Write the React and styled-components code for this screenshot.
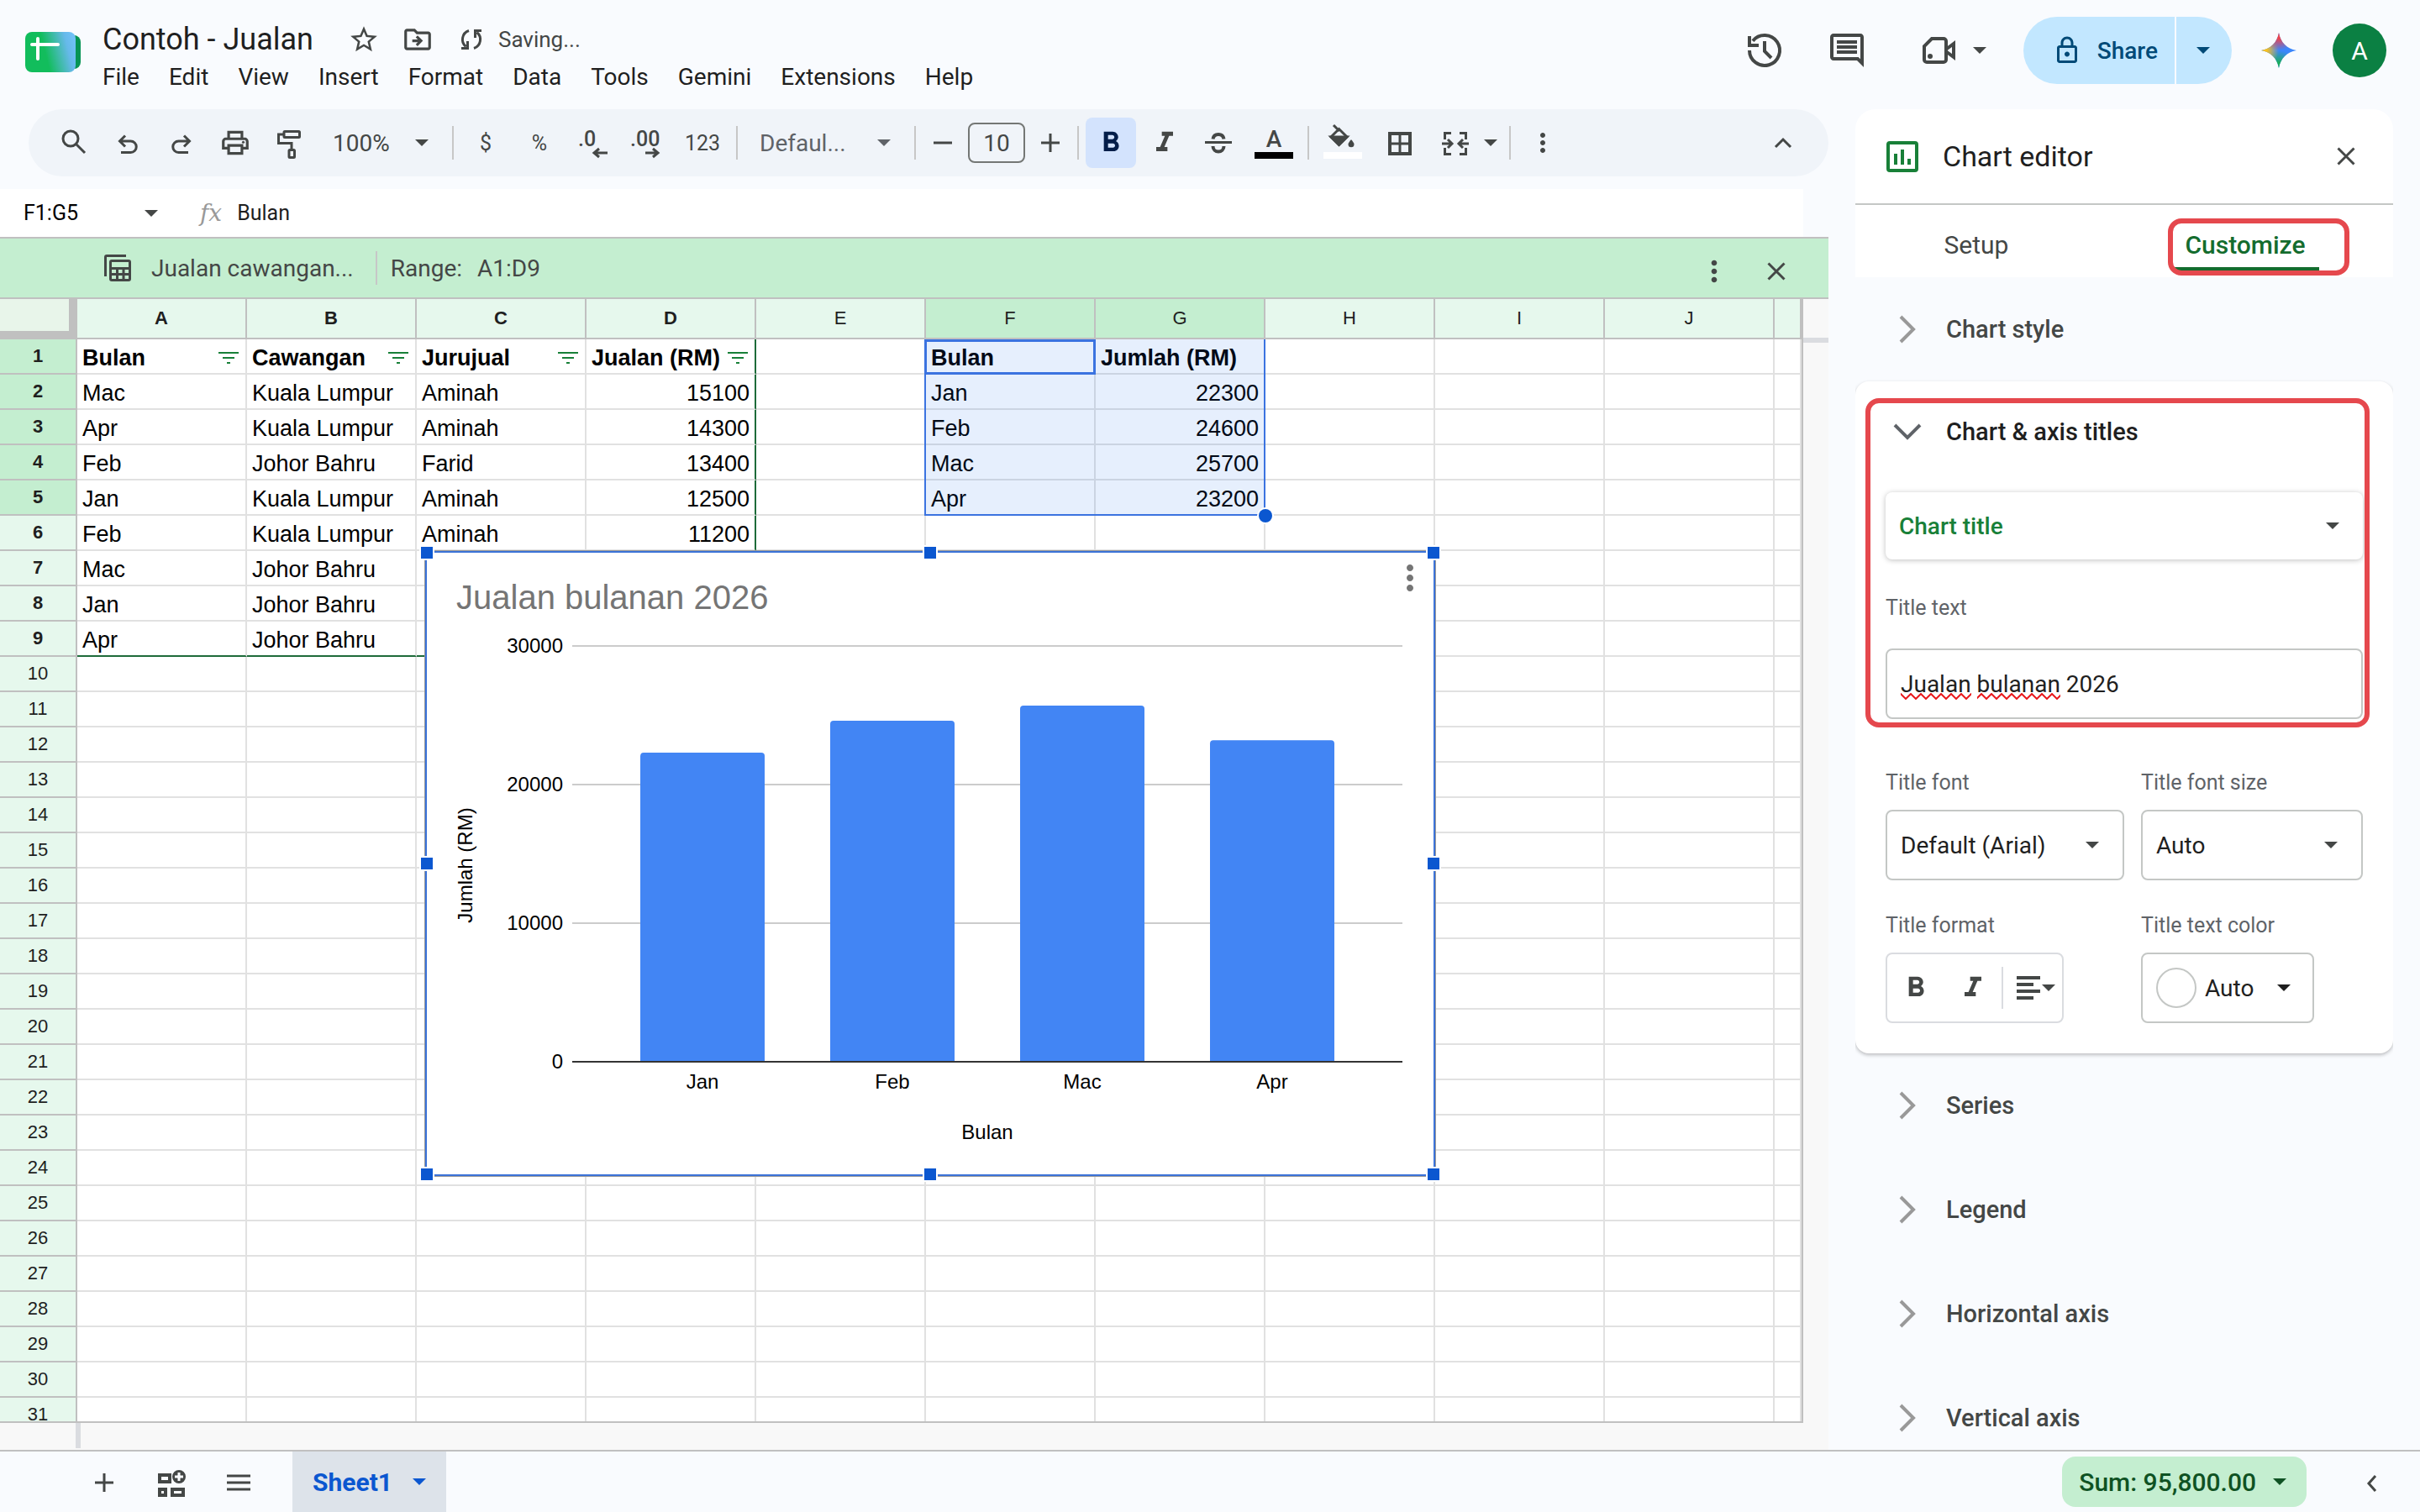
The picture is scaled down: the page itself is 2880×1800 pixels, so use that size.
import React, { useState } from "react";
import styled, { createGlobalStyle } from "styled-components";
import {
  MdStarBorder,
  MdOutlineDriveFileMove,
  MdOutlineComment,
  MdOutlineLock,
  MdOutlinePrint,
  MdFormatBold,
  MdFormatItalic,
  MdMoreVert,
} from "react-icons/md";

const menuItems = [
  "File",
  "Edit",
  "View",
  "Insert",
  "Format",
  "Data",
  "Tools",
  "Gemini",
  "Extensions",
  "Help",
];

const columns = ["A", "B", "C", "D", "E", "F", "G", "H", "I", "J"];

const sales = [
  ["Bulan", "Cawangan", "Jurujual", "Jualan (RM)"],
  ["Mac", "Kuala Lumpur", "Aminah", "15100"],
  ["Apr", "Kuala Lumpur", "Aminah", "14300"],
  ["Feb", "Johor Bahru", "Farid", "13400"],
  ["Jan", "Kuala Lumpur", "Aminah", "12500"],
  ["Feb", "Kuala Lumpur", "Aminah", "11200"],
  ["Mac", "Johor Bahru"],
  ["Jan", "Johor Bahru"],
  ["Apr", "Johor Bahru"],
];

const totals = [
  ["Bulan", "Jumlah (RM)"],
  ["Jan", "22300"],
  ["Feb", "24600"],
  ["Mac", "25700"],
  ["Apr", "23200"],
];

const rowCount = 31;

const cellValue = (row, col) => {
  if (col < 4) return sales[row]?.[col];
  if (col === 5 || col === 6) return totals[row]?.[col - 5];
  return undefined;
};

/* Icons */

const Icon = ({ size = 48, box = 48, width = 3, children }) => (
  <svg
    width={size}
    height={size}
    viewBox={`0 0 ${box} ${box}`}
    fill="none"
    stroke="currentColor"
    strokeWidth={width}
    aria-hidden="true"
  >
    {children}
  </svg>
);

const Caret = () => (
  <svg width="16" height="8" viewBox="0 0 16 8" aria-hidden="true">
    <path d="M0 0h16L8 8z" fill="currentColor" />
  </svg>
);

const SheetsLogo = () => (
  <Logo width="66" height="48" viewBox="0 0 66 48" aria-hidden="true">
    <defs>
      <linearGradient id="logoFace" x1="0" x2="1" y1="0.6" y2="0.4">
        <stop offset="0.4" stopColor="#12bd5c" />
        <stop offset="0.85" stopColor="#66b9ea" />
        <stop offset="1" stopColor="#6fc0f5" />
      </linearGradient>
    </defs>
    <rect x="24" y="4" width="42" height="40" rx="8" fill="#079455" />
    <rect width="60" height="48" rx="8" fill="url(#logoFace)" />
    <path
      d="M8 15h31M15 8v24"
      stroke="#fff"
      strokeWidth="4"
      strokeLinecap="round"
    />
  </Logo>
);

const SyncIcon = () => (
  <Icon>
    <path d="M21 13.5A11 11 0 0 0 17.5 32.5M12 34.5h7.5V26" />
    <path d="M27 34.5A11 11 0 0 0 30.5 15.5M36 13.5h-7.5V22" />
  </Icon>
);

const HistoryIcon = () => (
  <Icon width={4}>
    <path d="M6 24a18 18 0 1 0 4-11.3" />
    <path d="M6 7v11h11" />
    <path d="M24 13v12l8 8" />
  </Icon>
);

const CameraIcon = () => (
  <Icon width={4}>
    <path d="M15 10h14a3 3 0 0 1 3 3v22a3 3 0 0 1-3 3H9a3 3 0 0 1-3-3V19z" />
    <path d="M33 22l8-6v16l-8-6" />
    <circle cx="13" cy="31" r="3" fill="currentColor" stroke="none" />
  </Icon>
);

const GeminiIcon = () => (
  <svg width="42" height="42" viewBox="0 0 40 40" aria-hidden="true">
    <defs>
      <radialGradient id="gRed" cx="0.5" cy="0" r="0.5">
        <stop offset="0.3" stopColor="#f0434a" />
        <stop offset="1" stopColor="#f0434a" stopOpacity="0" />
      </radialGradient>
      <radialGradient id="gYellow" cx="0" cy="0.5" r="0.5">
        <stop offset="0.3" stopColor="#fcc21c" />
        <stop offset="1" stopColor="#fcc21c" stopOpacity="0" />
      </radialGradient>
      <radialGradient id="gGreen" cx="0.5" cy="1" r="0.5">
        <stop offset="0.3" stopColor="#1cae5b" />
        <stop offset="1" stopColor="#1cae5b" stopOpacity="0" />
      </radialGradient>
    </defs>
    {["#3b86fb", "url(#gGreen)", "url(#gYellow)", "url(#gRed)"].map((fill) => (
      <path
        key={fill}
        d="M20 0C22 11 29 18 40 20C29 22 22 29 20 40C18 29 11 22 0 20C11 18 18 11 20 0Z"
        fill={fill}
      />
    ))}
  </svg>
);

const SearchIcon = () => (
  <Icon>
    <circle cx="20" cy="19" r="9" />
    <path d="M26.5 25.500L37 36" />
  </Icon>
);

const UndoIcon = () => (
  <Icon>
    <path d="M21 15.5L14.5 22l6.5 6.5M14.5 22h13a6.75 6.75 0 0 1 0 13.5H16" />
  </Icon>
);

const RedoIcon = () => (
  <Icon>
    <path d="M27 15.5l6.5 6.5-6.5 6.5M33.5 22h-13a6.75 6.75 0 0 0 0 13.5H32" />
  </Icon>
);

const RollerIcon = () => (
  <Icon>
    <rect x="18" y="10.5" width="18.5" height="7" rx="1" />
    <path d="M18 14h-6.5v10.5H27V32" />
    <rect x="24" y="32.5" width="6.5" height="9" rx="1" />
  </Icon>
);

const DecimalIcon = ({ label, add }) => (
  <svg width="48" height="48" viewBox="0 0 48 48" aria-hidden="true">
    <text
      x={add ? 4 : 6}
      y="28"
      fontSize="25"
      fontWeight="500"
      fontFamily="Roboto, sans-serif"
      fill="currentColor"
    >
      {label}
    </text>
    <path
      d={add ? "M22 36h15M31 31l6 5-6 5" : "M26 36h15M31 31l-6 5 6 5"}
      fill="none"
      stroke="currentColor"
      strokeWidth="3"
    />
  </svg>
);

const StrikeIcon = () => (
  <Icon width={4}>
    <path d="M8 23.5h32" strokeWidth="3" />
    <path d="M17.5 19.5c.5-3.5 3-5.5 6.500-5.500s6 2 6.500 5.500" />
    <path d="M17.5 28c0 4 3 6.5 6.5 6.500s6.500-2.500 6.500-6.500" />
  </Icon>
);

const TextColorIcon = () => (
  <svg width="48" height="48" viewBox="0 0 48 48" aria-hidden="true">
    <text
      x="24"
      y="29"
      fontSize="28"
      fontWeight="500"
      textAnchor="middle"
      fontFamily="Roboto, sans-serif"
      fill="currentColor"
    >
      A
    </text>
    <path d="M1 35h46v8H1z" fill="#000" />
  </svg>
);

const FillIcon = () => (
  <Icon>
    <path d="M13 3l7 7M10 17l9.5-9.500L29 17l-9.500 9.500z" />
    <path d="M10 17h19l-9.500 9.500z" fill="currentColor" />
    <path
      d="M34 20s3.5 4 3.5 5.700a3.500 3.500 0 0 1-7 0C30.500 24 34 20 34 20z"
      fill="currentColor"
      stroke="none"
    />
    <rect x="1" y="35" width="46" height="8" fill="#fff" stroke="none" />
  </Icon>
);

const BordersIcon = () => (
  <Icon width={4}>
    <path d="M12 13h24v24H12z" />
    <path d="M24 13v24M12 25h24" strokeWidth="3" />
  </Icon>
);

const MergeIcon = () => (
  <Icon>
    <path d="M19 12.5h-7.5V20M29 12.5h7.5V20M19 37.5h-7.5V30M29 37.5h7.5V30" />
    <path d="M8 25h12M15 20l5 5-5 5M40 25H28M33 20l-5 5 5 5" />
  </Icon>
);

const TableIcon = () => (
  <Icon size={36} box={36}>
    <path d="M28 3.5H5A1.5 1.5 0 0 0 3.5 5v23" />
    <rect x="9.5" y="9.5" width="23" height="23" rx="1.5" />
    <path d="M9 18.5h24M9 25.5h24M17.5 18v14M25 18v14" />
  </Icon>
);

const CloseIcon = () => (
  <Icon>
    <path d="M14.5 14.5l19 19M33.5 14.5l-19 19" />
  </Icon>
);

const FilterIcon = () => (
  <svg width="24" height="16" viewBox="0 0 24 16" aria-hidden="true">
    <path d="M0 1h24v2H0zM5 7h14v2H5zM10 13h4v2h-4z" fill="#188038" />
  </svg>
);

const Chevron = ({ open }) => (
  <Icon width={4}>
    <path d={open ? "M9 16l15 15 15-15" : "M16 9l15 15-15 15"} />
  </Icon>
);

/* Parts */

const MenuButtonList = () => (
  <MenuBar>
    {menuItems.map((item) => (
      <MenuButton key={item}>{item}</MenuButton>
    ))}
  </MenuBar>
);

const ColumnChart = () => {
  const ticks = [30000, 20000, 10000, 0];
  const base = 606;
  const y = (value) => base - (value * 495) / 30000;
  return (
    <svg
      width="100%"
      viewBox="0 0 1198 740"
      fontFamily="Liberation Sans, Arial, sans-serif"
    >
      <text x="35" y="67" fontSize="40" fill="#757575">
        Jualan bulanan 2026
      </text>
      {ticks.map((tick) => (
        <g key={tick}>
          <path
            d={`M173 ${y(tick)}H1161`}
            stroke={tick ? "#ccc" : "#333"}
            strokeWidth="2"
          />
          <text x="162" y={y(tick) + 8} fontSize="24" textAnchor="end">
            {tick}
          </text>
        </g>
      ))}
      {totals.slice(1).map(([month, value], i) => {
        const x = 254 + i * 226;
        const top = y(Number(value));
        return (
          <g key={month}>
            <path
              d={`M${x} ${base - 1}V${top + 4}q0-4 4-4h140q4 0 4 4V${base - 1}z`}
              fill="#4285f4"
            />
            <text x={x + 74} y="638" fontSize="24" textAnchor="middle">
              {month}
            </text>
          </g>
        );
      })}
      <text x="667" y="698" fontSize="24" textAnchor="middle">
        Bulan
      </text>
      <text
        x="54"
        y="372"
        fontSize="24"
        textAnchor="middle"
        transform="rotate(-90 54 372)"
      >
        Jumlah (RM)
      </text>
    </svg>
  );
};

const Spreadsheet = () => (
  <SheetTable>
    <colgroup>
      <HeadCol />
      {columns.map((c) => (
        <DataCol key={c} />
      ))}
      <col />
    </colgroup>
    <thead>
      <tr>
        <Corner />
        {columns.map((c, i) => (
          <ColumnHead key={c} scope="col" $bold={i < 4} $on={i === 5 || i === 6}>
            {c}
          </ColumnHead>
        ))}
        <ColumnHead />
      </tr>
    </thead>
    <tbody>
      {Array.from({ length: rowCount }, (_, row) => (
        <tr key={row}>
          <RowHead scope="row" $bold={row < 9} $on={row < 5}>
            {row + 1}
          </RowHead>
          {columns.map((c, col) => {
            const value = cellValue(row, col);
            const filter = row === 0 && col < 4;
            return (
              <Cell
                key={c}
                $bold={row === 0}
                $number={/^\d+$/.test(value ?? "")}
                $edgeRight={col === 3 && row < 9}
                $edgeBottom={col < 4 && row === 8}
              >
                {filter ? (
                  <FilterCell>
                    {value}
                    <FilterButton aria-label={`Filter ${value}`}>
                      <FilterIcon />
                    </FilterButton>
                  </FilterCell>
                ) : (
                  value
                )}
              </Cell>
            );
          })}
          <Cell />
        </tr>
      ))}
    </tbody>
  </SheetTable>
);

const Section = ({ title, open }) => (
  <SectionButton aria-expanded={Boolean(open)} $open={open}>
    <Chevron open={open} />
    {title}
  </SectionButton>
);

const SelectField = ({ id, label, options, accent }) => (
  <SelectBox $accent={accent}>
    <select id={id} aria-label={label}>
      {options.map((o) => (
        <option key={o}>{o}</option>
      ))}
    </select>
    <Caret />
  </SelectBox>
);

const ChartEditor = () => {
  const [title, setTitle] = useState("Jualan bulanan 2026");

  return (
    <Panel>
      <PanelHeader>
        <Icon width={4}>
          <rect x="7" y="8" width="34" height="33" rx="2" />
          <path d="M16 21v13M24 16v18M32 27v7" />
        </Icon>
        <h2>Chart editor</h2>
        <IconButton aria-label="Close chart editor">
          <CloseIcon />
        </IconButton>
      </PanelHeader>
      <Tabs role="tablist">
        <Tab role="tab" aria-selected="false">
          <span>Setup</span>
        </Tab>
        <Tab role="tab" aria-selected="true" $active>
          <span>Customize</span>
          <TabHighlight />
        </Tab>
      </Tabs>
      <Section title="Chart style" />
      <Card>
        <Section title="Chart & axis titles" open />
        <CardBody>
          <SelectField
            label="Title type"
            accent
            options={["Chart title", "Horizontal axis title"]}
          />
          <TitleField>
            <FieldLabel htmlFor="title-text">Title text</FieldLabel>
            <TextBox
              id="title-text"
              value={title}
              spellCheck="false"
              onChange={(e) => setTitle(e.target.value)}
            />
            <Squiggle width="196" height="8" aria-hidden="true">
              <defs>
                <pattern
                  id="wave"
                  width="12"
                  height="8"
                  patternUnits="userSpaceOnUse"
                >
                  <path
                    d="M-1 0L6 7L13 0"
                    fill="none"
                    stroke="#e8191c"
                    strokeWidth="2"
                  />
                </pattern>
              </defs>
              <rect width="84" height="8" fill="url(#wave)" />
              <rect x="91" width="99" height="8" fill="url(#wave)" />
            </Squiggle>
          </TitleField>
          <FieldGrid>
            <Field>
              <FieldLabel htmlFor="title-font">Title font</FieldLabel>
              <SelectField
                id="title-font"
                options={["Default (Arial)", "Roboto"]}
              />
            </Field>
            <Field>
              <FieldLabel htmlFor="title-size">Title font size</FieldLabel>
              <SelectField id="title-size" options={["Auto", "12", "14"]} />
            </Field>
            <Field>
              <FieldLabel as="span">Title format</FieldLabel>
              <FormatGroup>
                <FormatButton aria-label="Bold">
                  <MdFormatBold size={40} />
                </FormatButton>
                <FormatButton aria-label="Italic">
                  <MdFormatItalic size={40} />
                </FormatButton>
                <AlignButton aria-label="Align">
                  <Icon size={28} box={28} width={4}>
                    <path d="M0 2h28M0 10h20M0 18h28M0 26h20" />
                  </Icon>
                  <Caret />
                </AlignButton>
              </FormatGroup>
            </Field>
            <Field>
              <FieldLabel htmlFor="title-color">Title text color</FieldLabel>
              <ColorButton id="title-color">
                <Swatch />
                Auto
                <Caret />
              </ColorButton>
            </Field>
          </FieldGrid>
        </CardBody>
        <CardHighlight />
      </Card>
      <Section title="Series" />
      <Section title="Legend" />
      <Section title="Horizontal axis" />
      <Section title="Vertical axis" />
    </Panel>
  );
};

const App = () => {
  const [formula, setFormula] = useState("Bulan");
  const [range, setRange] = useState("F1:G5");
  const [fontSize, setFontSize] = useState("10");

  return (
    <>
      <GlobalStyle />
      <Page>
        <Header>
          <SheetsLogo />
          <TitleBlock>
            <TitleRow>
              <h1>Contoh - Jualan</h1>
              <IconButton aria-label="Star">
                <MdStarBorder size={38} />
              </IconButton>
              <IconButton aria-label="Move">
                <MdOutlineDriveFileMove size={38} />
              </IconButton>
              <SaveState>
                <SyncIcon />
                Saving...
              </SaveState>
            </TitleRow>
            <MenuButtonList />
          </TitleBlock>
          <Actions>
            <IconButton aria-label="History">
              <HistoryIcon />
            </IconButton>
            <IconButton aria-label="Comments">
              <MdOutlineComment size={48} />
            </IconButton>
            <MeetButton aria-label="Join a call">
              <CameraIcon />
              <Caret />
            </MeetButton>
            <Share>
              <ShareButton>
                <MdOutlineLock size={36} />
                Share
              </ShareButton>
              <ShareMore aria-label="Sharing options">
                <Caret />
              </ShareMore>
            </Share>
            <GeminiButton aria-label="Ask Gemini">
              <GeminiIcon />
            </GeminiButton>
            <Avatar aria-label="Account">A</Avatar>
          </Actions>
        </Header>

        <Main>
          <Workspace>
            <Toolbar>
              <ToolGroup>
                <Tool aria-label="Search">
                  <SearchIcon />
                </Tool>
                <Tool aria-label="Undo">
                  <UndoIcon />
                </Tool>
                <Tool aria-label="Redo">
                  <RedoIcon />
                </Tool>
                <Tool aria-label="Print">
                  <MdOutlinePrint size={38} />
                </Tool>
                <Tool aria-label="Paint format">
                  <RollerIcon />
                </Tool>
                <ToolDropdown $width={152}>
                  100%
                  <Caret />
                </ToolDropdown>
              </ToolGroup>
              <Divider />
              <ToolGroup>
                <Tool aria-label="Currency">$</Tool>
                <Tool aria-label="Percent">%</Tool>
                <Tool aria-label="Decrease decimal places">
                  <DecimalIcon label=".0" />
                </Tool>
                <Tool aria-label="Increase decimal places">
                  <DecimalIcon label=".00" add />
                </Tool>
                <Tool $wide>123</Tool>
              </ToolGroup>
              <Divider />
              <ToolDropdown $width={194} $muted>
                Defaul...
                <Caret />
              </ToolDropdown>
              <Divider />
              <Stepper>
                <IconButton aria-label="Decrease font size">
                  <Icon>
                    <path d="M13 24h22" />
                  </Icon>
                </IconButton>
                <SizeBox
                  aria-label="Font size"
                  value={fontSize}
                  onChange={(e) => setFontSize(e.target.value)}
                />
                <IconButton aria-label="Increase font size">
                  <Icon>
                    <path d="M13 24h22M24 13v22" />
                  </Icon>
                </IconButton>
              </Stepper>
              <Divider />
              <ToolGroup>
                <Tool aria-label="Bold" aria-pressed="true" $active>
                  <MdFormatBold size={40} />
                </Tool>
                <Tool aria-label="Italic">
                  <MdFormatItalic size={40} />
                </Tool>
                <Tool aria-label="Strikethrough">
                  <StrikeIcon />
                </Tool>
                <Tool aria-label="Text color" $wide>
                  <TextColorIcon />
                </Tool>
              </ToolGroup>
              <Divider />
              <ToolGroup>
                <Tool aria-label="Fill color" $wide>
                  <FillIcon />
                </Tool>
                <Tool aria-label="Borders" $wide>
                  <BordersIcon />
                </Tool>
                <MergeTool aria-label="Merge cells">
                  <MergeIcon />
                  <Caret />
                </MergeTool>
              </ToolGroup>
              <Divider />
              <Tool aria-label="More">
                <MdMoreVert size={36} />
              </Tool>
              <CollapseTool aria-label="Hide the menus">
                <Icon>
                  <path d="M15 29l9-9 9 9" />
                </Icon>
              </CollapseTool>
            </Toolbar>

            <FormulaBar>
              <NameBox
                aria-label="Name box"
                value={range}
                onChange={(e) => setRange(e.target.value)}
              />
              <Caret />
              <Fx>fx</Fx>
              <FormulaInput
                aria-label="Formula"
                value={formula}
                onChange={(e) => setFormula(e.target.value)}
              />
            </FormulaBar>

            <RangeBar>
              <TableIcon />
              <RangeName>Jualan cawangan...</RangeName>
              <Divider />
              <RangeText>Range:</RangeText>
              <RangeText>A1:D9</RangeText>
              <RangeActions>
                <IconButton aria-label="Table options">
                  <MdMoreVert size={40} />
                </IconButton>
                <IconButton aria-label="Close table bar">
                  <CloseIcon />
                </IconButton>
              </RangeActions>
            </RangeBar>

            <SheetArea>
              <Viewport>
                <Spreadsheet />
                <Selection />
                <ActiveCell />
                <FillHandle />
                <ChartWindow>
                  <ColumnChart />
                  <ChartMenu aria-label="Chart options">
                    <MdMoreVert size={48} />
                  </ChartMenu>
                  {[
                    [0, 0],
                    [50, 0],
                    [100, 0],
                    [0, 50],
                    [100, 50],
                    [0, 100],
                    [50, 100],
                    [100, 100],
                  ].map(([left, top]) => (
                    <Handle
                      key={`${left}-${top}`}
                      style={{ left: `${left}%`, top: `${top}%` }}
                    />
                  ))}
                </ChartWindow>
              </Viewport>
              <VerticalTrack />
              <HorizontalTrack />
            </SheetArea>
          </Workspace>

          <ChartEditor />
        </Main>

        <BottomBar>
          <IconButton aria-label="Add sheet">
            <Icon>
              <path d="M13 25h22M24 14v22" />
            </Icon>
          </IconButton>
          <IconButton aria-label="Add table">
            <Icon width={4}>
              <path d="M10 16h12v8H10zM10 33h7v7h-7zM25 33h13v7H25z" />
              <circle cx="33" cy="18" r="5" strokeWidth="6" />
              <path d="M33 13v10M28 18h10" stroke="#f9fbfe" strokeWidth="3" />
            </Icon>
          </IconButton>
          <IconButton aria-label="All sheets">
            <Icon>
              <path d="M10 17h28M10 25h28M10 33h28" />
            </Icon>
          </IconButton>
          <SheetTab>
            Sheet1
            <Caret />
          </SheetTab>
          <SumButton>
            Sum: 95,800.00
            <Caret />
          </SumButton>
          <IconButton aria-label="Show side panel">
            <Icon>
              <path d="M28 17l-8 9 8 9" />
            </Icon>
          </IconButton>
        </BottomBar>
      </Page>
    </>
  );
};

const GlobalStyle = createGlobalStyle`
  * {
    box-sizing: border-box;
  }
  body {
    margin: 0;
    background: #f9fbfe;
    color: #1f1f1f;
    font-family: Roboto, Arial, sans-serif;
    font-size: 28px;
  }
  button, input, select {
    margin: 0;
    padding: 0;
    border: none;
    outline: none;
    background: none;
    color: inherit;
    font: inherit;
  }
  svg {
    display: block;
    flex-shrink: 0;
  }
  h1, h2 {
    margin: 0;
    font-weight: 400;
  }
`;

const Page = styled.div`
  height: 100vh;
  display: flex;
  flex-direction: column;
  overflow: hidden;
`;

const Header = styled.header`
  display: flex;
  align-items: flex-start;
  padding: 20px 40px 16px 30px;
`;

const Logo = styled.svg`
  margin-top: 18px;
`;

const TitleBlock = styled.div`
  margin: 4px 0 0 26px;
`;

const TitleRow = styled.div`
  display: flex;
  align-items: center;
  gap: 16px;
  height: 46px;
  color: #444746;
  h1 {
    margin-right: 20px;
    font-size: 36px;
    line-height: 44px;
    color: #1f1f1f;
  }
`;

const SaveState = styled.span`
  display: flex;
  align-items: center;
  gap: 8px;
  font-size: 26px;
`;

const MenuBar = styled.nav`
  display: flex;
  gap: 35px;
  height: 44px;
`;

const MenuButton = styled.button`
  line-height: 44px;
`;

const IconButton = styled.button`
  display: flex;
  align-items: center;
  justify-content: center;
  width: 48px;
  height: 48px;
  color: #444746;
`;

const Actions = styled.div`
  display: flex;
  align-items: center;
  gap: 50px;
  height: 80px;
  margin-left: auto;
`;

const MeetButton = styled.button`
  display: flex;
  align-items: center;
  gap: 16px;
  margin: 0 -6px 0 12px;
  color: #444746;
`;

const Share = styled.div`
  display: flex;
  gap: 2px;
  height: 80px;
  margin-right: -18px;
  color: #004a77;
`;

const ShareButton = styled.button`
  display: flex;
  align-items: center;
  gap: 18px;
  padding: 0 20px 0 34px;
  border-radius: 40px 0 0 40px;
  background: #c2e7ff;
  font-weight: 500;
`;

const ShareMore = styled.button`
  display: flex;
  align-items: center;
  padding: 0 26px 0 24px;
  border-radius: 0 40px 40px 0;
  background: #c2e7ff;
`;

const GeminiButton = styled(IconButton)`
  margin-right: -10px;
`;

const Avatar = styled.button`
  width: 64px;
  height: 64px;
  border-radius: 50%;
  background: #0b8043;
  color: #fff;
  font-size: 30px;
`;

const Main = styled.main`
  flex: 1;
  min-height: 0;
  display: grid;
  grid-template-columns: minmax(0, 1fr) 640px;
  gap: 32px;
  padding-right: 32px;
`;

const Workspace = styled.section`
  display: flex;
  flex-direction: column;
  min-height: 0;
`;

const Toolbar = styled.div`
  display: flex;
  align-items: center;
  flex-shrink: 0;
  height: 80px;
  margin: 0 0 15px 34px;
  padding: 0 24px;
  border-radius: 40px;
  background: #f0f4f9;
  color: #444746;
`;

const ToolGroup = styled.div`
  display: flex;
  align-items: center;
  gap: 4px;
`;

const Divider = styled.span`
  width: 2px;
  height: 40px;
  margin: 0 8px;
  background: #c7c7c7;
`;

const Tool = styled.button`
  display: flex;
  align-items: center;
  justify-content: center;
  width: ${(p) => (p.$wide ? 64 : 60)}px;
  height: 60px;
  border-radius: 8px;
  background: ${(p) => (p.$active ? "#d3e3fd" : "transparent")};
  color: ${(p) => (p.$active ? "#041e49" : "#444746")};
  font-size: 25px;
`;

const CollapseTool = styled(Tool)`
  margin-left: auto;
`;

const MergeTool = styled.button`
  display: flex;
  align-items: center;
  gap: 10px;
  padding: 0 6px;
`;

const ToolDropdown = styled.button`
  display: flex;
  align-items: center;
  justify-content: space-between;
  width: ${(p) => p.$width}px;
  height: 60px;
  padding: 0 20px 0 18px;
  color: ${(p) => (p.$muted ? "#5f6368" : "#444746")};
`;

const Stepper = styled.div`
  display: flex;
  align-items: center;
  gap: 6px;
`;

const SizeBox = styled.input`
  width: 68px;
  height: 48px;
  border: 2px solid #747775;
  border-radius: 8px;
  text-align: center;
`;

const FormulaBar = styled.div`
  display: flex;
  align-items: center;
  flex-shrink: 0;
  height: 57px;
  margin-right: 30px;
  padding-left: 28px;
  background: #fff;
  color: #444746;
`;

const NameBox = styled.input`
  width: 144px;
  color: #000;
  font-size: 25px;
`;

const Fx = styled.span`
  margin: 0 18px 0 50px;
  color: #999;
  font: italic 28px "DejaVu Serif", serif;
`;

const FormulaInput = styled.input`
  flex: 1;
  color: #1f1f1f;
  font-size: 25px;
`;

const RangeBar = styled.div`
  display: flex;
  align-items: center;
  flex-shrink: 0;
  height: 74px;
  padding: 0 38px 0 122px;
  border-top: 2px solid #c0c0c0;
  border-bottom: 2px solid #c0c0c0;
  background: #c4eed0;
  color: #444746;
`;

const RangeName = styled.span`
  margin: 0 18px 0 22px;
`;

const RangeText = styled.span`
  margin: 0 10px 0 8px;
`;

const RangeActions = styled.div`
  display: flex;
  gap: 26px;
  margin-left: auto;
  padding-top: 8px;
`;

const SheetArea = styled.div`
  flex: 1;
  min-height: 0;
  display: grid;
  grid-template-columns: minmax(0, 1fr) 30px;
  grid-template-rows: minmax(0, 1fr) 32px;
`;

const Viewport = styled.div`
  position: relative;
  overflow: hidden;
  border-right: 2px solid #c0c0c0;
  border-bottom: 2px solid #c0c0c0;
  background: #fff;
`;

const VerticalTrack = styled.div`
  background: #f8f8f8;
  &::before {
    content: "";
    display: block;
    height: 6px;
    margin-top: 46px;
    background: #dadce0;
  }
`;

const HorizontalTrack = styled.div`
  grid-column: 1 / -1;
  background: #f8f8f8;
  &::before {
    content: "";
    display: block;
    width: 6px;
    height: 30px;
    margin-left: 90px;
    background: #dadce0;
  }
`;

const SheetTable = styled.table`
  width: 100%;
  table-layout: fixed;
  border-collapse: separate;
  border-spacing: 0;
  font-family: "Liberation Sans", Arial, sans-serif;
  th,
  td {
    padding: 0;
    border-style: solid;
    border-width: 0 2px 2px 0;
  }
`;

const HeadCol = styled.col`
  width: 92px;
`;

const DataCol = styled.col`
  width: 202px;
`;

const Corner = styled.td`
  && {
    border: 0 solid #c0c0c0;
    border-right-width: 10px;
    border-bottom-width: 10px;
  }
  background: #e8f5ea;
`;

const ColumnHead = styled.th`
  height: 48px;
  border-color: #c0c0c0;
  background: ${(p) => (p.$on ? "#c4eed0" : "#e6f8ed")};
  font-size: 22px;
  font-weight: ${(p) => (p.$bold ? 700 : 400)};
`;

const RowHead = styled.th`
  height: 42px;
  border-color: #c0c0c0;
  background: ${(p) => (p.$on ? "#c4eed0" : "#e6f8ed")};
  font-size: 22px;
  line-height: 24px;
  font-weight: ${(p) => (p.$bold ? 700 : 400)};
`;

const Cell = styled.td`
  && {
    height: 42px;
    padding: 4px 6px 0;
    border-right-color: ${(p) => (p.$edgeRight ? "#1e6b3a" : "#e1e1e1")};
    border-bottom-color: ${(p) => (p.$edgeBottom ? "#1e6b3a" : "#e1e1e1")};
  }
  color: #000;
  font-size: 27px;
  line-height: 32px;
  font-weight: ${(p) => (p.$bold ? 700 : 400)};
  text-align: ${(p) => (p.$number ? "right" : "left")};
  white-space: nowrap;
`;

const FilterCell = styled.div`
  display: flex;
  align-items: center;
  justify-content: space-between;
`;

const FilterButton = styled.button`
  padding-right: 2px;
`;

const Selection = styled.div`
  position: absolute;
  left: 1100px;
  top: 48px;
  width: 406px;
  height: 210px;
  border: 2px solid #3b73e0;
  border-top: none;
  background: rgba(14, 101, 235, 0.1);
`;

const ActiveCell = styled.div`
  position: absolute;
  left: 1100px;
  top: 48px;
  width: 204px;
  height: 42px;
  border: 3px solid #3b73e0;
`;

const FillHandle = styled.div`
  position: absolute;
  left: 1498px;
  top: 250px;
  width: 16px;
  height: 16px;
  border-radius: 50%;
  background: #0b57d0;
  box-shadow: 0 0 0 2px #fff;
`;

const ChartWindow = styled.div`
  position: absolute;
  left: 506px;
  top: 300px;
  width: 1202px;
  border: 2px solid #3b73d8;
  background: #fff;
  box-shadow: 0 0 0 1px #999;
`;

const ChartMenu = styled.button`
  position: absolute;
  top: 6px;
  right: 4px;
  color: #757575;
`;

const Handle = styled.span`
  position: absolute;
  width: 14px;
  height: 14px;
  margin: -7px 0 0 -7px;
  background: #0b57d0;
  box-shadow: 0 0 0 2px #fff;
`;

const Panel = styled.aside`
  min-height: 0;
  overflow: hidden;
  color: #444746;
`;

const PanelHeader = styled.div`
  display: flex;
  align-items: center;
  gap: 24px;
  height: 114px;
  padding: 0 32px;
  border-bottom: 2px solid #c4c7c5;
  border-radius: 24px 24px 0 0;
  background: #fff;
  color: #188038;
  h2 {
    font-size: 34px;
    color: #1f1f1f;
  }
  button {
    margin-left: auto;
  }
`;

const Tabs = styled.div`
  display: grid;
  grid-template-columns: 288px 1fr;
  height: 86px;
  background: #fff;
`;

const Tab = styled.button`
  position: relative;
  display: flex;
  justify-content: center;
  color: ${(p) => (p.$active ? "#146c2e" : "#444746")};
  font-size: 30px;
  font-weight: ${(p) => (p.$active ? 500 : 400)};
  span {
    height: 78px;
    padding: 12px 16px 0;
    border-bottom: 4px solid ${(p) => (p.$active ? "#146c2e" : "transparent")};
    line-height: 72px;
  }
`;

const Highlight = styled.div`
  position: absolute;
  border: 6px solid #e5484d;
  border-radius: 16px;
  pointer-events: none;
`;

const TabHighlight = styled(Highlight)`
  inset: 16px 52px 2px 84px;
`;

const CardHighlight = styled(Highlight)`
  inset: 20px 28px 388px 12px;
`;

const SectionButton = styled.button`
  display: flex;
  align-items: center;
  gap: 22px;
  width: 100%;
  height: ${(p) => (p.$open ? 120 : 124)}px;
  padding: 0 38px;
  color: ${(p) => (p.$open ? "#1f1f1f" : "#444746")};
  font-size: 29px;
  font-weight: 500;
  svg {
    color: ${(p) => (p.$open ? "#5f6368" : "#999")};
  }
`;

const Card = styled.div`
  position: relative;
  border-radius: 16px;
  background: #fff;
  box-shadow: 0 2px 4px rgba(0, 0, 0, 0.25);
`;

const CardBody = styled.div`
  padding: 12px 36px 36px;
`;

const SelectBox = styled.div`
  display: grid;
  align-items: center;
  height: ${(p) => (p.$accent ? 80 : 84)}px;
  border: ${(p) => (p.$accent ? "none" : "2px solid #c4c7c5")};
  border-radius: 8px;
  background: #fff;
  box-shadow: ${(p) => (p.$accent ? "0 1px 6px rgba(0, 0, 0, 0.25)" : "none")};
  select,
  svg {
    grid-area: 1 / 1;
  }
  select {
    height: 100%;
    padding: 0 16px;
    appearance: none;
    color: ${(p) => (p.$accent ? "#188038" : "#1f1f1f")};
    font-weight: ${(p) => (p.$accent ? 500 : 400)};
  }
  svg {
    justify-self: end;
    margin-right: 28px;
    pointer-events: none;
  }
`;

const TitleField = styled.div`
  position: relative;
  display: flex;
  flex-direction: column;
  gap: 32px;
  margin: 42px 0 60px;
`;

const FieldLabel = styled.label`
  color: #5f6368;
  font-size: 25px;
  line-height: 32px;
`;

const TextBox = styled.input`
  height: 84px;
  padding: 0 16px;
  border: 2px solid #c4c7c5;
  border-radius: 8px;
  color: #1f1f1f;
`;

const Squiggle = styled.svg`
  position: absolute;
  left: 18px;
  bottom: 23px;
`;

const FieldGrid = styled.div`
  display: grid;
  grid-template-columns: 284px 1fr;
  gap: 38px 20px;
`;

const Field = styled.div`
  display: flex;
  flex-direction: column;
  align-items: stretch;
  gap: 16px;
`;

const FormatGroup = styled.div`
  display: flex;
  align-items: center;
  width: 212px;
  height: 84px;
  border: 2px solid #dadce0;
  border-radius: 8px;
`;

const FormatButton = styled.button`
  display: flex;
  justify-content: center;
  width: 68px;
`;

const AlignButton = styled.button`
  display: flex;
  align-items: center;
  gap: 2px;
  height: 50px;
  padding-left: 16px;
  border-left: 2px solid #dadce0;
`;

const ColorButton = styled.button`
  display: flex;
  align-items: center;
  gap: 10px;
  width: 206px;
  height: 84px;
  padding: 0 26px 0 16px;
  border: 2px solid #c4c7c5;
  border-radius: 8px;
  color: #1f1f1f;
  svg {
    margin-left: auto;
  }
`;

const Swatch = styled.span`
  width: 48px;
  height: 48px;
  border: 2px solid #c4c7c5;
  border-radius: 50%;
`;

const BottomBar = styled.footer`
  display: flex;
  align-items: center;
  flex-shrink: 0;
  gap: 32px;
  height: 74px;
  padding: 0 33px 0 100px;
  border-top: 2px solid #c0c0c0;
`;

const SheetTab = styled.button`
  display: flex;
  align-items: center;
  gap: 24px;
  height: 100%;
  margin-left: 8px;
  padding: 0 24px;
  background: #dde3ea;
  color: #0b57d0;
  font-size: 30px;
  font-weight: 700;
`;

const SumButton = styled.button`
  display: flex;
  align-items: center;
  gap: 20px;
  height: 60px;
  margin: 0 22px 0 auto;
  padding: 0 24px 0 20px;
  border-radius: 16px;
  background: #c4eed0;
  color: #0f5223;
  font-size: 30px;
  font-weight: 500;
`;

export default App;
